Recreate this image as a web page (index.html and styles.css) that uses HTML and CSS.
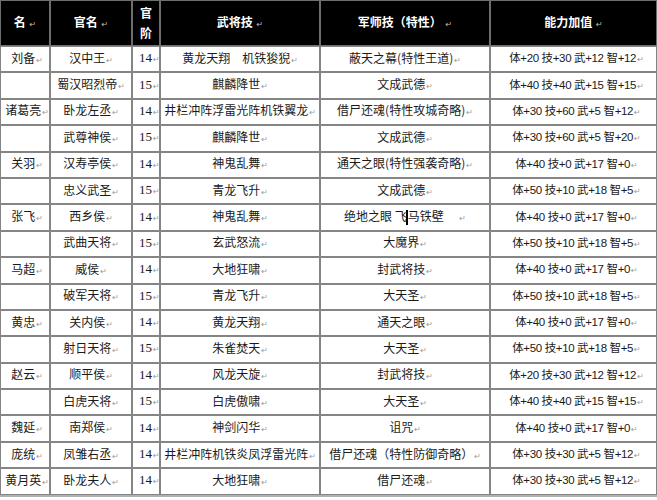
FILE: index.html
```html
<!DOCTYPE html>
<html lang="zh">
<head>
<meta charset="utf-8">
<link rel="stylesheet" href="styles.css">
</head>
<body>
<table class="grid">
<colgroup>
<col class="c1"><col class="c2"><col class="c3"><col class="c4"><col class="c5"><col class="c6">
</colgroup>
<thead>
<tr class="head">
<th>名 <span class="pm">↵</span></th>
<th>官名 <span class="pm">↵</span></th>
<th class="rank">官<br>阶</th>
<th>武将技 <span class="pm">↵</span></th>
<th>军师技（特性） <span class="pm">↵</span></th>
<th>能力加值 <span class="pm">↵</span></th>
</tr>
</thead>
<tbody>
<tr><td class="who">刘备<span class="pm">↵</span></td><td>汉中王<span class="pm">↵</span></td><td class="num">14<span class="pm">↵</span></td><td>黄龙天翔　机铁狻猊<span class="pm">↵</span></td><td>蔽天之幕(特性王道)<span class="pm">↵</span></td><td class="stat">体+20 技+30 武+12 智+12<span class="pm">↵</span></td></tr>
<tr><td class="who"></td><td>蜀汉昭烈帝<span class="pm">↵</span></td><td class="num">15<span class="pm">↵</span></td><td>麒麟降世<span class="pm">↵</span></td><td>文成武德<span class="pm">↵</span></td><td class="stat">体+40 技+40 武+15 智+15<span class="pm">↵</span></td></tr>
<tr><td class="who">诸葛亮<span class="pm">↵</span></td><td>卧龙左丞<span class="pm">↵</span></td><td class="num">14<span class="pm">↵</span></td><td>井栏冲阵浮雷光阵机铁翼龙<span class="pm">↵</span></td><td>借尸还魂(特性攻城奇略)<span class="pm">↵</span></td><td class="stat">体+30 技+60 武+5 智+12<span class="pm">↵</span></td></tr>
<tr><td class="who"></td><td>武尊神侯<span class="pm">↵</span></td><td class="num">15<span class="pm">↵</span></td><td>麒麟降世<span class="pm">↵</span></td><td>文成武德<span class="pm">↵</span></td><td class="stat">体+30 技+60 武+5 智+20<span class="pm">↵</span></td></tr>
<tr><td class="who">关羽<span class="pm">↵</span></td><td>汉寿亭侯<span class="pm">↵</span></td><td class="num">14<span class="pm">↵</span></td><td>神鬼乱舞<span class="pm">↵</span></td><td>通天之眼(特性强袭奇略)<span class="pm">↵</span></td><td class="stat">体+40 技+0 武+17 智+0<span class="pm">↵</span></td></tr>
<tr><td class="who"></td><td>忠义武圣<span class="pm">↵</span></td><td class="num">15<span class="pm">↵</span></td><td>青龙飞升<span class="pm">↵</span></td><td>文成武德<span class="pm">↵</span></td><td class="stat">体+50 技+10 武+18 智+5<span class="pm">↵</span></td></tr>
<tr><td class="who">张飞<span class="pm">↵</span></td><td>西乡侯<span class="pm">↵</span></td><td class="num">14<span class="pm">↵</span></td><td>神鬼乱舞<span class="pm">↵</span></td><td>绝地之眼 飞<span class="caret"></span>马铁壁 　<span class="pm">↵</span></td><td class="stat">体+40 技+0 武+17 智+0<span class="pm">↵</span></td></tr>
<tr><td class="who"></td><td>武曲天将<span class="pm">↵</span></td><td class="num">15<span class="pm">↵</span></td><td>玄武怒流<span class="pm">↵</span></td><td>大魔界<span class="pm">↵</span></td><td class="stat">体+50 技+10 武+18 智+5<span class="pm">↵</span></td></tr>
<tr><td class="who">马超<span class="pm">↵</span></td><td>威侯<span class="pm">↵</span></td><td class="num">14<span class="pm">↵</span></td><td>大地狂啸<span class="pm">↵</span></td><td>封武将技<span class="pm">↵</span></td><td class="stat">体+40 技+0 武+17 智+0<span class="pm">↵</span></td></tr>
<tr><td class="who"></td><td>破军天将<span class="pm">↵</span></td><td class="num">15<span class="pm">↵</span></td><td>青龙飞升<span class="pm">↵</span></td><td>大天圣<span class="pm">↵</span></td><td class="stat">体+50 技+10 武+18 智+5<span class="pm">↵</span></td></tr>
<tr><td class="who">黄忠<span class="pm">↵</span></td><td>关内侯<span class="pm">↵</span></td><td class="num">14<span class="pm">↵</span></td><td>黄龙天翔<span class="pm">↵</span></td><td>通天之眼<span class="pm">↵</span></td><td class="stat">体+40 技+0 武+17 智+0<span class="pm">↵</span></td></tr>
<tr><td class="who"></td><td>射日天将<span class="pm">↵</span></td><td class="num">15<span class="pm">↵</span></td><td>朱雀焚天<span class="pm">↵</span></td><td>大天圣<span class="pm">↵</span></td><td class="stat">体+50 技+10 武+18 智+5<span class="pm">↵</span></td></tr>
<tr><td class="who">赵云<span class="pm">↵</span></td><td>顺平侯<span class="pm">↵</span></td><td class="num">14<span class="pm">↵</span></td><td>风龙天旋<span class="pm">↵</span></td><td>封武将技<span class="pm">↵</span></td><td class="stat">体+20 技+30 武+12 智+12<span class="pm">↵</span></td></tr>
<tr><td class="who"></td><td>白虎天将<span class="pm">↵</span></td><td class="num">15<span class="pm">↵</span></td><td>白虎傲啸<span class="pm">↵</span></td><td>大天圣<span class="pm">↵</span></td><td class="stat">体+40 技+40 武+15 智+15<span class="pm">↵</span></td></tr>
<tr><td class="who">魏延<span class="pm">↵</span></td><td>南郑侯<span class="pm">↵</span></td><td class="num">14<span class="pm">↵</span></td><td>神剑闪华<span class="pm">↵</span></td><td>诅咒<span class="pm">↵</span></td><td class="stat">体+40 技+0 武+17 智+0<span class="pm">↵</span></td></tr>
<tr><td class="who">庞统<span class="pm">↵</span></td><td>凤雏右丞<span class="pm">↵</span></td><td class="num">14<span class="pm">↵</span></td><td>井栏冲阵机铁炎凤浮雷光阵<span class="pm">↵</span></td><td>借尸还魂（特性防御奇略）<span class="pm">↵</span></td><td class="stat">体+30 技+30 武+5 智+12<span class="pm">↵</span></td></tr>
<tr><td class="who">黄月英<span class="pm">↵</span></td><td>卧龙夫人<span class="pm">↵</span></td><td class="num">14<span class="pm">↵</span></td><td>大地狂啸<span class="pm">↵</span></td><td>借尸还魂<span class="pm">↵</span></td><td class="stat">体+30 技+30 武+5 智+12<span class="pm">↵</span></td></tr>
</tbody>
</table>
</body>
</html>
```
FILE: styles.css
```css
html, body {
  margin: 0;
  padding: 0;
  background: #ffffff;
}
.grid {
  width: 657px;
  table-layout: fixed;
  border-collapse: separate;
  border-spacing: 0;
  font-family: "Noto Sans CJK SC", "Liberation Sans", sans-serif;
  font-size: 12px;
  color: #1a1a1a;
  border-bottom: 2px solid #b0b0b0;
}
.c1 { width: 50px; }
.c2 { width: 82px; }
.c3 { width: 28px; }
.c4 { width: 160px; }
.c5 { width: 170px; }
.c6 { width: 167px; }
.grid th,
.grid td {
  border: 1px solid #858585;
  padding: 0 2px;
  text-align: center;
  white-space: nowrap;
  overflow: hidden;
  line-height: 14px;
}
.head th {
  background: #000000;
  color: #ffffff;
  font-weight: bold;
  height: 44px;
  border-color: #6e6e6e;
}
.head .rank {
  line-height: 20px;
}
.grid tbody td {
  height: 24.4px;
}
.grid td.who {
  padding-left: 4px;
  padding-right: 0;
}
.num {
  font-family: "Liberation Serif", serif;
  font-size: 13px;
}
.grid td.num {
  text-align: left;
  padding-left: 6px;
}
.grid td.stat {
  font-family: "Liberation Sans", "Noto Sans CJK SC", sans-serif;
  font-size: 11.5px;
  letter-spacing: -0.35px;
  padding-left: 8px;
}
.pm {
  font-family: "DejaVu Sans", sans-serif;
  font-size: 8px;
  color: #9a9a9a;
  font-weight: normal;
  margin-left: 1px;
  letter-spacing: 0;
}
.head .pm {
  color: #bdbdbd;
}
.caret {
  display: inline-block;
  width: 2px;
  height: 15px;
  background: #000;
  vertical-align: middle;
  margin: 0 0 0 -1px;
}
```
